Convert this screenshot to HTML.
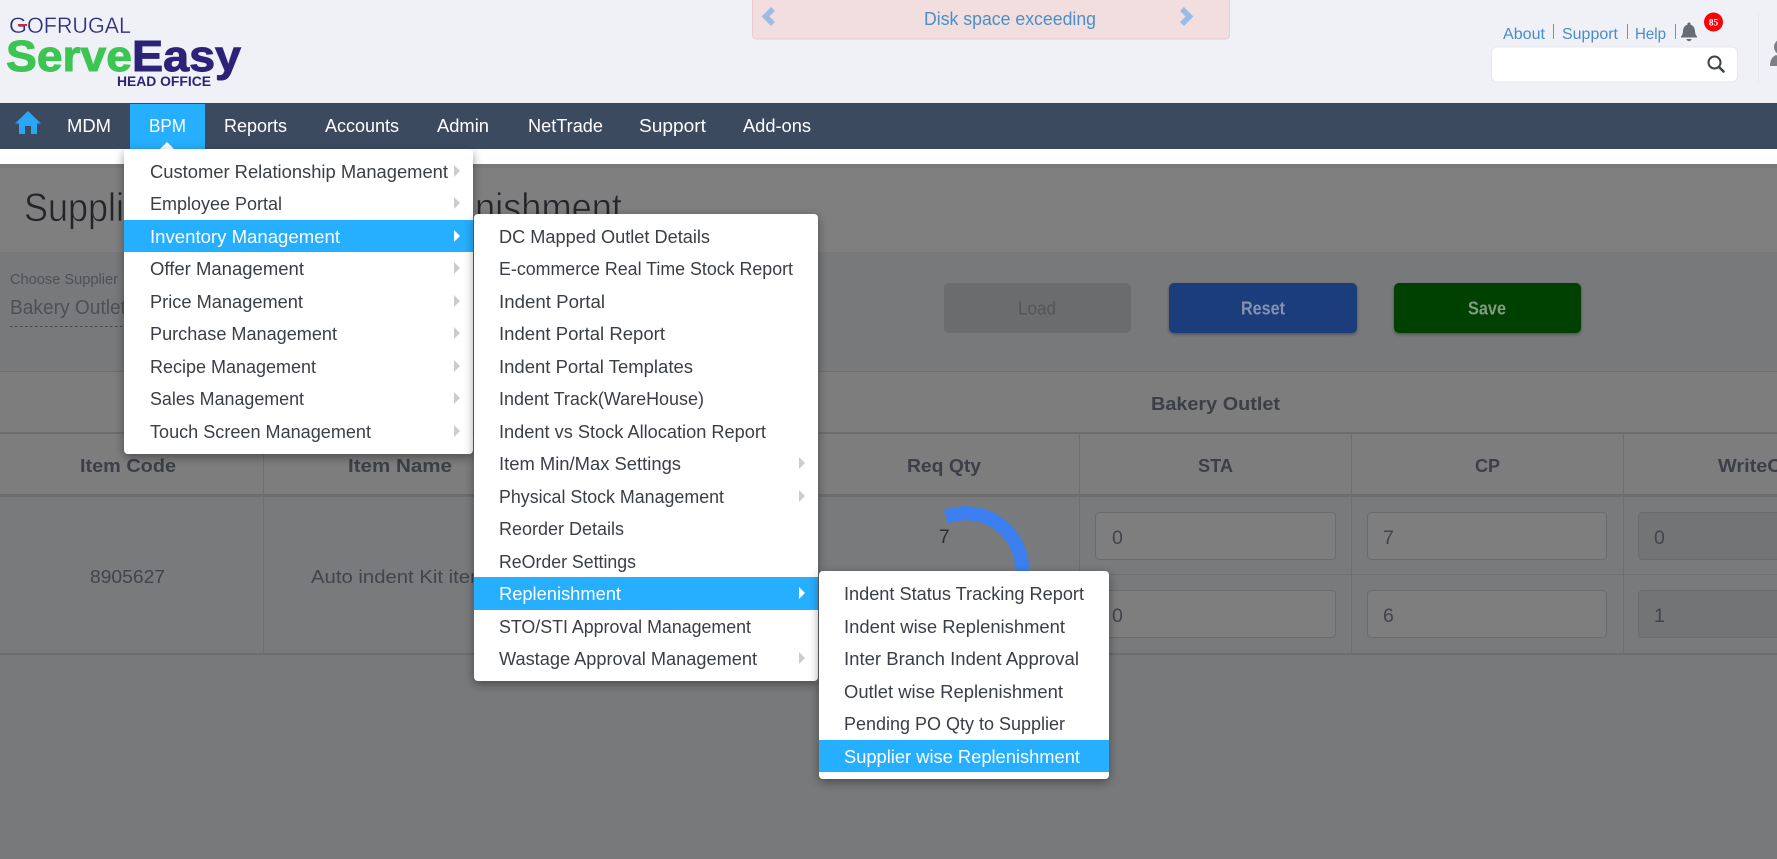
<!DOCTYPE html>
<html lang="en">
<head>
<meta charset="utf-8">
<title>Supplier wise Replenishment</title>
<style>
html,body{margin:0;padding:0;width:1777px;height:859px;overflow:hidden;background:#7b7c7d}
svg{display:block}
text{font-family:"Liberation Sans",sans-serif}
.m{font-size:18px;fill:#3a3e46}
.w{font-size:18px;fill:#fff}
.h{font-size:18.5px;font-weight:bold;fill:#3c3f47}
.c{font-size:18.5px;fill:#41444c}
.v{font-size:19.5px;fill:#41444c}
.l{font-size:16px;fill:#4a8bc9}
</style>
</head>
<body>
<svg width="1777" height="859" viewBox="0 0 1777 859" xmlns="http://www.w3.org/2000/svg">
<defs>
<filter id="sh" x="-10%" y="-10%" width="120%" height="120%"><feDropShadow dx="0" dy="3" stdDeviation="5" flood-color="#000" flood-opacity=".4"/></filter>
<filter id="bs" x="-10%" y="-10%" width="120%" height="130%"><feDropShadow dx="0" dy="1.5" stdDeviation="1.5" flood-color="#000" flood-opacity=".35"/></filter>
</defs>

<!-- header -->
<rect width="1777" height="103" fill="#f0f1f7"/>
<g font-size="22" fill="#2c2f7d" stroke="#f0f1f7" stroke-width=".3">
<text x="9" y="33" textLength="18" lengthAdjust="spacingAndGlyphs">G</text>
<text x="27" y="33" textLength="104" lengthAdjust="spacingAndGlyphs">OFRUGAL</text>
</g>
<rect x="18" y="24" width="9" height="2" fill="#e8202a"/>
<text x="6" y="71" font-size="44" font-weight="bold" fill="#3cc553" stroke="#3cc553" stroke-width="1" textLength="126" lengthAdjust="spacingAndGlyphs">Serve</text>
<text x="132" y="71" font-size="44" font-weight="bold" fill="#2c2379" stroke="#2c2379" stroke-width="1" textLength="109" lengthAdjust="spacingAndGlyphs">Easy</text>
<text x="117" y="86" font-size="13.5" font-weight="bold" fill="#2c2379" textLength="94" lengthAdjust="spacingAndGlyphs">HEAD OFFICE</text>

<rect x="752.5" y="-5" width="477" height="44" rx="4" fill="#f2dede" stroke="#ebccd1"/>
<path d="M773 9L765.500 16.500L773 24" fill="none" stroke="#9dbbe3" stroke-width="5.500"/>
<path d="M1182 9L1189.500 16.500L1182 24" fill="none" stroke="#9dbbe3" stroke-width="5.500"/>
<text x="924" y="25" font-size="18.500" fill="#4a90c8" textLength="172" lengthAdjust="spacingAndGlyphs">Disk space exceeding</text>

<text class="l" x="1503" y="39" textLength="42" lengthAdjust="spacingAndGlyphs">About</text>
<text class="l" x="1562" y="39" textLength="56" lengthAdjust="spacingAndGlyphs">Support</text>
<text class="l" x="1635" y="39" textLength="31" lengthAdjust="spacingAndGlyphs">Help</text>
<path d="M1553.500 24V39M1627.500 24V39M1675.500 24V39" stroke="#8a8c90" stroke-width="1"/>
<path d="M1689 22.500a1.600 1.600 0 0 1 1.600 1.600v.7c3 .8 4.200 3.400 4.400 6.400.2 2.600.8 4 2 5.300v1H1681v-1c1.200-1.300 1.800-2.700 2-5.300.2-3 1.400-5.600 4.400-6.400v-.7a1.600 1.600 0 0 1 1.600-1.600zM1686.500 39h5a2.500 2.200 0 0 1-5 0z" fill="#666b78"/>
<circle cx="1713.500" cy="22" r="9.500" fill="#fb0007"/>
<text x="1713.500" y="25.500" font-size="9.500" font-weight="bold" fill="#fff" text-anchor="middle" style="font-family:'Liberation Serif',serif">85</text>
<rect x="1491.500" y="47" width="246" height="35" rx="6" fill="#fff" stroke="#e7e8ef"/>
<circle cx="1714.500" cy="62.500" r="6" fill="none" stroke="#3f4449" stroke-width="2"/>
<path d="M1719 67L1723.500 71.500" stroke="#3f4449" stroke-width="2.600" stroke-linecap="round"/>
<path d="M1758.500 13V83" stroke="#e8e9ee"/>
<circle cx="1782" cy="47" r="8" fill="#7c7f88"/>
<path d="M1770 66c0-5 1.500-9 6-11 3 2 10 2 13 0v11z" fill="#7c7f88"/>

<!-- nav -->
<rect y="103" width="1777" height="46" fill="#3c4a60"/>
<rect y="149" width="1777" height="15" fill="#fff"/>
<path d="M28 111L41 123.500H37V134H31V126H25V134H19V123.500H15Z" fill="#2aa6f5"/>
<rect x="130" y="104" width="75" height="45" fill="#26aeff"/>
<path d="M160 149L167 142L174 149Z" fill="#fff"/>
<text class="w" x="67" y="132" textLength="44" lengthAdjust="spacingAndGlyphs">MDM</text>
<text class="w" x="149" y="132" textLength="37" lengthAdjust="spacingAndGlyphs">BPM</text>
<text class="w" x="224" y="132" textLength="63" lengthAdjust="spacingAndGlyphs">Reports</text>
<text class="w" x="325" y="132" textLength="74" lengthAdjust="spacingAndGlyphs">Accounts</text>
<text class="w" x="437" y="132" textLength="52" lengthAdjust="spacingAndGlyphs">Admin</text>
<text class="w" x="528" y="132" textLength="75" lengthAdjust="spacingAndGlyphs">NetTrade</text>
<text class="w" x="639" y="132" textLength="67" lengthAdjust="spacingAndGlyphs">Support</text>
<text class="w" x="743" y="132" textLength="68" lengthAdjust="spacingAndGlyphs">Add-ons</text>

<!-- dimmed page -->
<rect y="164" width="1777" height="695" fill="#7c7d7e"/>
<rect y="164" width="1777" height="88" fill="#7f7f7f"/>
<rect y="164" width="1777" height="4" fill="#797979"/>
<g font-size="40" fill="#24252a" stroke="#7f7f7f" stroke-width=".7">
<text x="24" y="221" textLength="100" lengthAdjust="spacingAndGlyphs">Suppli</text>
<text x="124" y="221" textLength="351" lengthAdjust="spacingAndGlyphs">er wise Reple</text>
<text x="475" y="221" textLength="147" lengthAdjust="spacingAndGlyphs">nishment</text>
</g>

<rect y="252" width="1777" height="120" fill="#78797b"/>
<text x="10" y="284" font-size="15" fill="#4d5055" textLength="108" lengthAdjust="spacingAndGlyphs">Choose Supplier</text>
<text x="10" y="314" font-size="20" fill="#4d5055" textLength="116" lengthAdjust="spacingAndGlyphs">Bakery Outlet</text>
<path d="M10 326.500H130" stroke="#45474b" stroke-dasharray="2.500 2.500"/>

<rect x="944" y="283" width="187" height="50" rx="5" fill="#6b6c6e"/>
<text x="1018" y="314.500" font-size="18" fill="#555658" textLength="38" lengthAdjust="spacingAndGlyphs">Load</text>
<rect x="1169" y="283" width="188" height="50" rx="5" fill="#1e3e7b" filter="url(#bs)"/>
<text x="1241" y="314.500" font-size="18" font-weight="bold" fill="#8493ad" textLength="44" lengthAdjust="spacingAndGlyphs">Reset</text>
<rect x="1394" y="283" width="187" height="50" rx="5" fill="#003f00" filter="url(#bs)"/>
<text x="1468" y="314.500" font-size="18" font-weight="bold" fill="#829b82" textLength="38" lengthAdjust="spacingAndGlyphs">Save</text>

<!-- table -->
<rect y="372" width="1777" height="123" fill="#7d7d7d"/>
<rect y="497" width="1777" height="156" fill="#797a7c"/>
<rect y="655" width="1777" height="204" fill="#77797b"/>
<rect y="371" width="1777" height="1" fill="#6f7072"/>
<rect y="432" width="1777" height="2" fill="#6c6d6f"/>
<rect y="494" width="1777" height="3" fill="#6c6d6f"/>
<rect x="819" y="574" width="958" height="1" fill="#6f7072"/>
<rect y="653" width="1777" height="2" fill="#6c6d6f"/>
<path d="M263.500 434V653M1079.500 434V653M1351.500 434V653M1623.500 434V653" stroke="#6e6f71"/>
<text class="h" x="1151" y="410" textLength="129" lengthAdjust="spacingAndGlyphs">Bakery Outlet</text>
<text class="h" x="80" y="472" textLength="96" lengthAdjust="spacingAndGlyphs">Item Code</text>
<text class="h" x="348" y="472" textLength="104" lengthAdjust="spacingAndGlyphs">Item Name</text>
<text class="h" x="907" y="472" textLength="74" lengthAdjust="spacingAndGlyphs">Req Qty</text>
<text class="h" x="1198" y="472" textLength="35" lengthAdjust="spacingAndGlyphs">STA</text>
<text class="h" x="1475" y="472" textLength="25" lengthAdjust="spacingAndGlyphs">CP</text>
<text class="h" x="1718" y="472" textLength="78" lengthAdjust="spacingAndGlyphs">WriteOff</text>
<text class="c" x="90" y="583" textLength="75" lengthAdjust="spacingAndGlyphs">8905627</text>
<text class="c" x="311" y="583" textLength="176" lengthAdjust="spacingAndGlyphs">Auto indent Kit item</text>
<path d="M946 517A56 56 0 0 1 1022 571" fill="none" stroke="#3b7ff0" stroke-width="14"/>
<text x="939" y="543" font-size="19" fill="#2c2e33">7</text>

<rect x="1095.500" y="512.500" width="240" height="47" rx="4" fill="#7e7e7e" stroke="#6a6b6d"/>
<rect x="1367.500" y="512.500" width="239" height="47" rx="4" fill="#7e7e7e" stroke="#6a6b6d"/>
<rect x="1638.500" y="512.500" width="160" height="47" rx="4" fill="#737476" stroke="#6a6b6d"/>
<rect x="1095.500" y="590.500" width="240" height="47" rx="4" fill="#7e7e7e" stroke="#6a6b6d"/>
<rect x="1367.500" y="590.500" width="239" height="47" rx="4" fill="#7e7e7e" stroke="#6a6b6d"/>
<rect x="1638.500" y="590.500" width="160" height="47" rx="4" fill="#737476" stroke="#6a6b6d"/>
<text class="v" x="1112" y="544">0</text>
<text class="v" x="1383" y="544">7</text>
<text class="v" x="1654" y="544">0</text>
<text class="v" x="1112" y="622">0</text>
<text class="v" x="1383" y="622">6</text>
<text class="v" x="1654" y="622">1</text>

<!-- menu 1 -->
<rect x="124" y="149" width="349" height="305" rx="4" fill="#fff" filter="url(#sh)"/>
<rect x="124" y="220" width="349" height="32" fill="#26aeff"/>
<text class="m" x="150" y="178" textLength="298" lengthAdjust="spacingAndGlyphs">Customer Relationship Management</text>
<text class="m" x="150" y="210" textLength="132" lengthAdjust="spacingAndGlyphs">Employee Portal</text>
<text class="w" x="150" y="243" textLength="190" lengthAdjust="spacingAndGlyphs">Inventory Management</text>
<text class="m" x="150" y="275" textLength="154" lengthAdjust="spacingAndGlyphs">Offer Management</text>
<text class="m" x="150" y="308" textLength="153" lengthAdjust="spacingAndGlyphs">Price Management</text>
<text class="m" x="150" y="340" textLength="187" lengthAdjust="spacingAndGlyphs">Purchase Management</text>
<text class="m" x="150" y="373" textLength="166" lengthAdjust="spacingAndGlyphs">Recipe Management</text>
<text class="m" x="150" y="405" textLength="154" lengthAdjust="spacingAndGlyphs">Sales Management</text>
<text class="m" x="150" y="438" textLength="221" lengthAdjust="spacingAndGlyphs">Touch Screen Management</text>
<path d="M454 165l6 6-6 6zM454 197l6 6-6 6zM454 262l6 6-6 6zM454 295l6 6-6 6zM454 327l6 6-6 6zM454 360l6 6-6 6zM454 392l6 6-6 6zM454 425l6 6-6 6z" fill="#cccccc"/>
<path d="M454 230l6 6-6 6z" fill="#fff"/>

<!-- menu 2 -->
<rect x="474" y="214" width="344" height="467" rx="4" fill="#fff" filter="url(#sh)"/>
<rect x="474" y="577" width="344" height="33" fill="#26aeff"/>
<text class="m" x="499" y="243" textLength="211" lengthAdjust="spacingAndGlyphs">DC Mapped Outlet Details</text>
<text class="m" x="499" y="275" textLength="294" lengthAdjust="spacingAndGlyphs">E-commerce Real Time Stock Report</text>
<text class="m" x="499" y="308" textLength="106" lengthAdjust="spacingAndGlyphs">Indent Portal</text>
<text class="m" x="499" y="340" textLength="166" lengthAdjust="spacingAndGlyphs">Indent Portal Report</text>
<text class="m" x="499" y="373" textLength="194" lengthAdjust="spacingAndGlyphs">Indent Portal Templates</text>
<text class="m" x="499" y="405" textLength="205" lengthAdjust="spacingAndGlyphs">Indent Track(WareHouse)</text>
<text class="m" x="499" y="438" textLength="267" lengthAdjust="spacingAndGlyphs">Indent vs Stock Allocation Report</text>
<text class="m" x="499" y="470" textLength="182" lengthAdjust="spacingAndGlyphs">Item Min/Max Settings</text>
<text class="m" x="499" y="503" textLength="225" lengthAdjust="spacingAndGlyphs">Physical Stock Management</text>
<text class="m" x="499" y="535" textLength="125" lengthAdjust="spacingAndGlyphs">Reorder Details</text>
<text class="m" x="499" y="568" textLength="137" lengthAdjust="spacingAndGlyphs">ReOrder Settings</text>
<text class="w" x="499" y="600" textLength="122" lengthAdjust="spacingAndGlyphs">Replenishment</text>
<text class="m" x="499" y="633" textLength="252" lengthAdjust="spacingAndGlyphs">STO/STI Approval Management</text>
<text class="m" x="499" y="665" textLength="258" lengthAdjust="spacingAndGlyphs">Wastage Approval Management</text>
<path d="M799 457l6 6-6 6zM799 490l6 6-6 6zM799 652l6 6-6 6z" fill="#cccccc"/>
<path d="M799 587l6 6-6 6z" fill="#fff"/>

<!-- menu 3 -->
<rect x="819" y="571" width="290" height="208" rx="4" fill="#fff" filter="url(#sh)"/>
<rect x="819" y="740" width="290" height="32" fill="#26aeff"/>
<text class="m" x="844" y="600" textLength="240" lengthAdjust="spacingAndGlyphs">Indent Status Tracking Report</text>
<text class="m" x="844" y="633" textLength="221" lengthAdjust="spacingAndGlyphs">Indent wise Replenishment</text>
<text class="m" x="844" y="665" textLength="235" lengthAdjust="spacingAndGlyphs">Inter Branch Indent Approval</text>
<text class="m" x="844" y="698" textLength="219" lengthAdjust="spacingAndGlyphs">Outlet wise Replenishment</text>
<text class="m" x="844" y="730" textLength="221" lengthAdjust="spacingAndGlyphs">Pending PO Qty to Supplier</text>
<text class="w" x="844" y="763" textLength="236" lengthAdjust="spacingAndGlyphs">Supplier wise Replenishment</text>
</svg>
</body>
</html>
